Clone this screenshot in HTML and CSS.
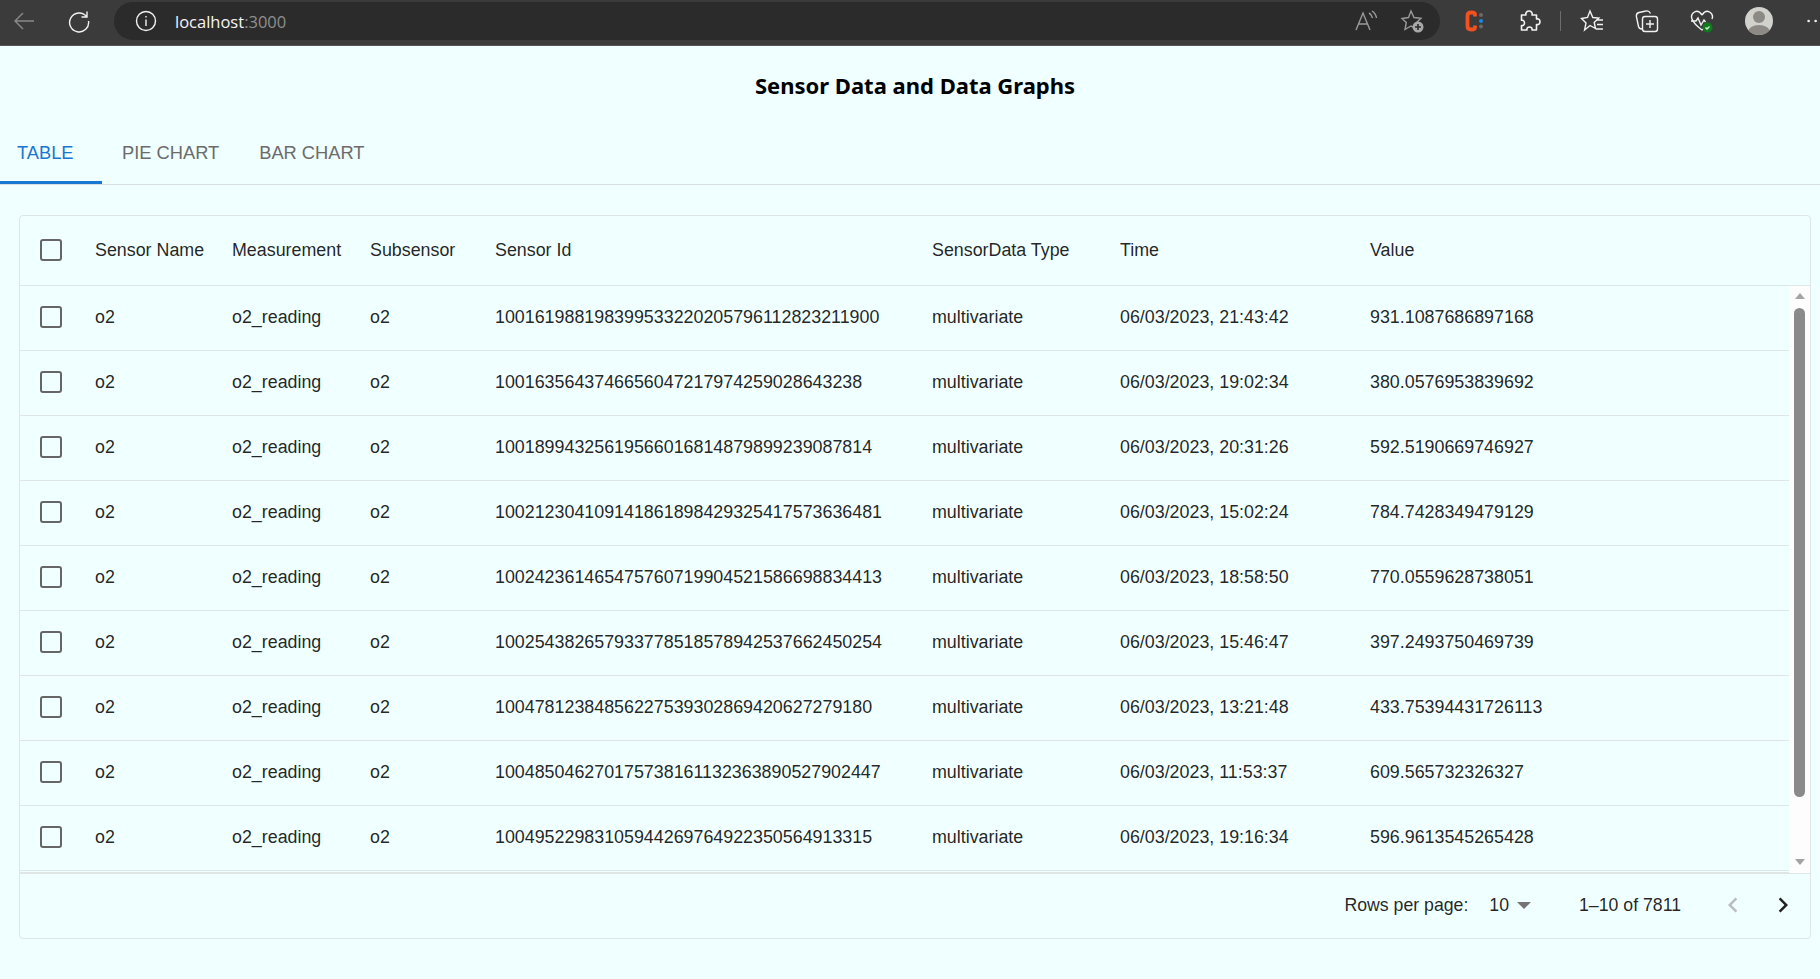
FILE: index.html
```html
<!DOCTYPE html>
<html lang="en">
<head>
<meta charset="utf-8">
<title>Sensor Data</title>
<link rel="stylesheet" href="styles.css">
</head>
<body>
<header class="browser">
  <svg class="ic ic-back" viewBox="0 0 24 24"><path d="M22 12H3M11 4l-8 8 8 8"/></svg>
  <svg class="ic ic-reload" viewBox="0 0 24 24"><path d="M19.5 7.5A9.5 9.5 0 1 0 21.5 12M20 2.5v5.500h-5.500"/></svg>
  <div class="addr">
    <svg class="ic" viewBox="0 0 24 24"><circle cx="12" cy="12" r="9.5"/><path d="M12 10.5V17M12 7v1.500"/></svg>
    <span class="url">localhost<span class="port">:3000</span></span>
    <div class="addr-tools">
      <svg class="ic dim" viewBox="0 0 24 24"><path d="M2 21 9 4l7 17M4.500 15h9M15 4c2 1 3 3 3.500 5M18 2c2.500 1.500 4 4 4.500 7"/></svg>
      <svg class="ic dim" viewBox="0 0 24 24"><path d="M11 2l3 6.500 7 .8-5 4.700 1 6-6-3-6 3.500 1.300-7L2 9.500 8.500 8.500z"/><circle class="fill-grey" cx="18" cy="18" r="5.500"/><path class="plus" d="M18 15v6M15 18h6"/></svg>
    </div>
  </div>
  <div class="tools tools-ext">
    <svg class="ic ic-c" viewBox="0 0 24 24"><path class="c-letter" d="M12 7.500V5.500C12 4 11 3.500 8.500 3.500S4.500 4.500 4.500 6.500v11c0 2 1.500 3 4 3s3.500-.5 3.500-2v-2"/><circle class="dot-g" cx="18" cy="6" r="2"/><circle class="dot-b" cx="18" cy="12" r="2"/><circle class="dot-g" cx="18" cy="17.500" r="2"/></svg>
    <svg class="ic ic-puzzle" viewBox="0 0 24 24"><path d="M9 6c-.7-2.200.8-4 3-4s3.700 1.800 3 4h4.500v4c2-.6 3.500.8 3.500 2.800s-1.500 3.200-3.500 2.700V21h-4.500c.5-1.800-.8-3-2.500-3s-3 1.200-2.500 3H4.500v-4.500c1.500.5 3-.6 3-2.500S6 10.800 4.500 11.200V6z"/></svg>
  </div>
  <span class="sep"></span>
  <div class="tools">
    <svg class="ic" viewBox="0 0 24 24"><path d="M10 2l2.800 6.500 6 .6-4.600 4.400 1.300 6L10 16.500 4.600 21 6 14 1.500 9.500 7.500 8.500zM16 11h7M17 15.500h6M15.500 20h7.500"/></svg>
    <svg class="ic" viewBox="0 0 24 24"><path d="M7 20c-2 0-3-.5-3.500-2.500L1.500 8C1 5.500 2 4 4 3.500L11 2c2-.5 3.500.5 4.500 2.500"/><rect x="7.500" y="7.500" width="15" height="15" rx="2.500"/><path d="M15 11v8M11 15h8"/></svg>
    <svg class="ic" viewBox="0 0 24 24"><path d="M12 6C10 3 7 1.500 4.500 3S1 7.500 2 10c1.500 4 6 8 10 11 1.500-1 3-2.500 4-3.500M12 6c2-3 5-4.500 7.500-3S23 7.500 22 10"/><path d="M1 12h5l2-3 3 7 3-5 1.500 2"/><circle class="fill-green" cx="17.500" cy="18.500" r="5"/><path class="check" d="M15.500 18.500l1.500 1.500 2.500-2.500"/></svg>
    <div class="avatar"><span class="av-head"></span><span class="av-body"></span></div>
  </div>
  <svg class="more" viewBox="0 0 16 4"><circle cx="3" cy="2" r="1.500"/><circle cx="11" cy="2" r="1.500"/></svg>
</header>

<main class="page">
  <h1 class="title">Sensor Data and Data Graphs</h1>
  <nav class="tabs">
    <a class="tab tab-active">Table</a>
    <a class="tab">Pie Chart</a>
    <a class="tab">Bar Chart</a>
  </nav>

  <section class="card">
    <div class="row head">
      <span class="box"></span>
      <span>Sensor Name</span><span>Measurement</span><span>Subsensor</span><span>Sensor Id</span><span>SensorData Type</span><span>Time</span><span>Value</span>
    </div>
    <div class="body">
      <div class="rows">
        <div class="row"><span class="box"></span><span>o2</span><span>o2_reading</span><span>o2</span><span>100161988198399533220205796112823211900</span><span>multivariate</span><span>06/03/2023, 21:43:42</span><span>931.1087686897168</span></div>
        <div class="row"><span class="box"></span><span>o2</span><span>o2_reading</span><span>o2</span><span>1001635643746656047217974259028643238</span><span>multivariate</span><span>06/03/2023, 19:02:34</span><span>380.0576953839692</span></div>
        <div class="row"><span class="box"></span><span>o2</span><span>o2_reading</span><span>o2</span><span>10018994325619566016814879899239087814</span><span>multivariate</span><span>06/03/2023, 20:31:26</span><span>592.5190669746927</span></div>
        <div class="row"><span class="box"></span><span>o2</span><span>o2_reading</span><span>o2</span><span>100212304109141861898429325417573636481</span><span>multivariate</span><span>06/03/2023, 15:02:24</span><span>784.7428349479129</span></div>
        <div class="row"><span class="box"></span><span>o2</span><span>o2_reading</span><span>o2</span><span>100242361465475760719904521586698834413</span><span>multivariate</span><span>06/03/2023, 18:58:50</span><span>770.0559628738051</span></div>
        <div class="row"><span class="box"></span><span>o2</span><span>o2_reading</span><span>o2</span><span>100254382657933778518578942537662450254</span><span>multivariate</span><span>06/03/2023, 15:46:47</span><span>397.2493750469739</span></div>
        <div class="row"><span class="box"></span><span>o2</span><span>o2_reading</span><span>o2</span><span>10047812384856227539302869420627279180</span><span>multivariate</span><span>06/03/2023, 13:21:48</span><span>433.75394431726113</span></div>
        <div class="row"><span class="box"></span><span>o2</span><span>o2_reading</span><span>o2</span><span>100485046270175738161132363890527902447</span><span>multivariate</span><span>06/03/2023, 11:53:37</span><span>609.565732326327</span></div>
        <div class="row"><span class="box"></span><span>o2</span><span>o2_reading</span><span>o2</span><span>10049522983105944269764922350564913315</span><span>multivariate</span><span>06/03/2023, 19:16:34</span><span>596.9613545265428</span></div>
      </div>
      <div class="scrollbar">
        <span class="arrow-up"></span>
        <span class="thumb"></span>
        <span class="arrow-down"></span>
      </div>
    </div>
    <footer class="foot">
      <span>Rows per page:</span>
      <span class="select">10<span class="caret"></span></span>
      <span class="count">1–10 of 7811</span>
      <svg class="chev chev-off" viewBox="0 0 24 24"><path d="M15.410 7.410 14 6l-6 6 6 6 1.410-1.410L10.830 12z"/></svg>
      <svg class="chev" viewBox="0 0 24 24"><path d="M10 6 8.590 7.410 13.170 12l-4.580 4.590L10 18l6-6z"/></svg>
    </footer>
  </section>
</main>
</body>
</html>
```

FILE: styles.css
```css
* { box-sizing: border-box; }
html, body { margin: 0; height: 100%; }
body {
  background: #f0ffff;
  font-family: "Liberation Sans", Arial, sans-serif;
  font-size: 17.85px;
  color: rgba(0, 0, 0, 0.87);
  overflow: hidden;
}

.browser {
  display: flex;
  align-items: flex-start;
  height: 46px;
  padding-top: 2px;
  background: #3b3b3b;
  border-bottom: 1px solid #555;
  color: #fff;
  overflow: hidden;
}
.ic {
  flex: none;
  width: 24px;
  height: 24px;
  fill: none;
  stroke: #f2f2f2;
  stroke-width: 1.4;
}
.ic-back { margin: 7px 0 0 12px; stroke: #8a8a8a; }
.ic-reload { margin: 7px 0 0 31px; }
.addr {
  display: flex;
  align-items: center;
  flex: none;
  width: 1326px;
  height: 38px;
  margin-left: 23px;
  padding: 0 16px 0 20px;
  border-radius: 19px;
  background: #2b2b2b;
}
.url {
  margin-left: 17px;
  font-family: "Open Sans", sans-serif;
  font-size: 16.5px;
  color: #f5f5f5;
}
.port { color: #8f8f8f; }
.addr-tools { display: flex; gap: 22px; margin-left: auto; }
.dim { stroke: #9a9a9a; }
.fill-grey { fill: #a8a8a8; stroke: none; }
.plus { stroke: #2b2b2b; stroke-width: 1.6; }
.tools { display: flex; flex: none; align-items: center; gap: 31px; height: 38px; }
.tools-ext { gap: 30px; margin-left: 23px; }
.c-letter { stroke: #f4511e; stroke-width: 3.8; }
.dot-g { fill: #6a6a6a; stroke: none; }
.dot-b { fill: #1a86e8; stroke: none; }
.ic-puzzle { stroke-linejoin: round; stroke-width: 1.6; }
.sep { flex: none; width: 1px; height: 20px; margin: 9px 19px 0; background: #6d6d6d; }
.fill-green { fill: #0f7b1c; stroke: none; }
.check { stroke: #d7f5d7; stroke-width: 1.3; }
.avatar {
  position: relative;
  flex: none;
  width: 28px;
  height: 28px;
  border-radius: 50%;
  background: #d2d2cd;
  overflow: hidden;
}
.av-head {
  position: absolute;
  left: 8px;
  top: 4px;
  width: 12px;
  height: 12px;
  border-radius: 50%;
  background: #8d8a85;
}
.av-body {
  position: absolute;
  left: 3px;
  top: 18px;
  width: 22px;
  height: 14px;
  border-radius: 50%;
  background: #8d8a85;
}
.more { flex: none; width: 14px; height: 4px; margin: 17px 0 0 33px; fill: #eee; }

.title {
  margin: 0;
  padding: 25px 0 0 10px;
  height: 90px;
  font-family: "Noto Sans", sans-serif;
  font-size: 22px;
  line-height: 29px;
  font-weight: 700;
  color: #000;
  text-align: center;
}
.tabs {
  display: flex;
  height: 49px;
  border-bottom: 1px solid #d5dfdf;
}
.tab {
  display: flex;
  align-items: center;
  height: 48px;
  padding: 0 20px 14px;
  font-size: 18.3px;
  text-transform: uppercase;
  color: #6b6b6b;
}
.tab-active {
  width: 102px;
  padding: 0 0 11px 17px;
  color: #1976d2;
  border-bottom: 3px solid #1976d2;
}

.card {
  margin: 30px 9px 0 19px;
  height: 724px;
  border: 1px solid #dfe6e6;
  border-radius: 4px;
}
.row {
  display: grid;
  grid-template-columns: 75px 137px 138px 125px 437px 188px 250px 1fr;
  align-items: center;
  height: 65px;
  padding-bottom: 2px;
  border-bottom: 1px solid #dfe6e6;
}
.head { height: 70px; padding-bottom: 0; }
.head .box { margin-bottom: 1px; }
.box {
  width: 22px;
  height: 22px;
  margin-left: 20px;
  border: 2.5px solid #666;
  border-radius: 3px;
}
.body { display: flex; height: 587px; }
.rows { flex: 1; height: 587px; overflow: hidden; border-bottom: 1px solid #dfe6e6; }
.scrollbar {
  display: flex;
  flex-direction: column;
  align-items: center;
  flex: none;
  width: 21px;
  background: #fdfdfd;
  padding-top: 7px;
}
.arrow-up, .arrow-down {
  flex: none;
  width: 0;
  height: 0;
  border-left: 5px solid transparent;
  border-right: 5px solid transparent;
}
.arrow-up { border-bottom: 6px solid #a3a3a3; }
.arrow-down { margin-top: auto; margin-bottom: 8px; border-top: 6px solid #a3a3a3; }
.thumb {
  width: 11px;
  height: 489px;
  margin-top: 9px;
  border-radius: 6px;
  background: #8a8a8a;
}
.foot {
  display: flex;
  align-items: center;
  justify-content: flex-end;
  height: 65px;
  padding: 0 12px 2px 0;
  font-size: 17.7px;
  border-top: 1px solid #dfe6e6;
}
.select { display: flex; align-items: center; margin-left: 21px; }
.caret {
  width: 0;
  height: 0;
  margin-left: 8px;
  border-left: 7px solid transparent;
  border-right: 7px solid transparent;
  border-top: 7px solid #757575;
}
.count { margin: 0 37px 0 48px; }
.chev { width: 30px; height: 30px; fill: #222; }
.chev + .chev { margin-left: 20px; }
.chev-off { fill: #b8bebe; }
```
